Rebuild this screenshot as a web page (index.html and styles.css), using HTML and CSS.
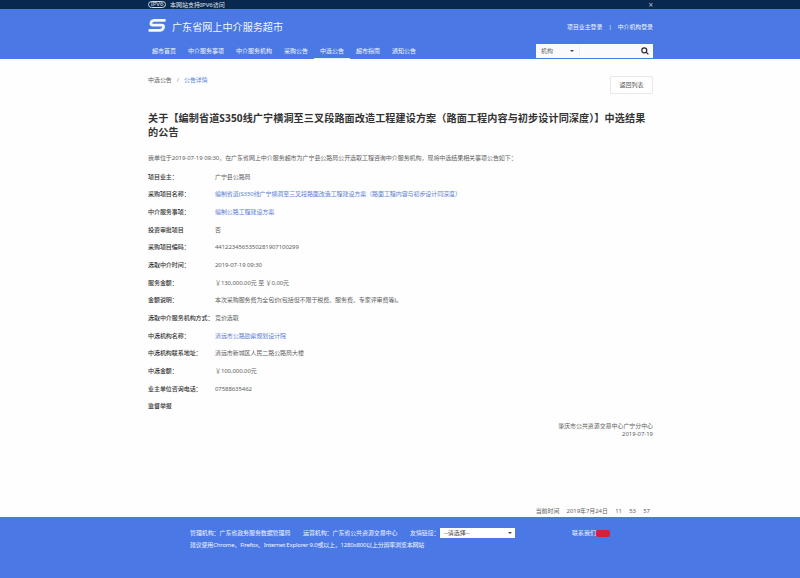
FILE: index.html
```html
<!DOCTYPE html>
<html lang="zh-CN">
<head>
<meta charset="utf-8">
<title>广东省网上中介服务超市</title>
<link rel="stylesheet" href="styles.css">
</head>
<body>
<div class="topbar"><div class="wrap topbar-row"><span class="ipv6">IPV6</span><span>本网站支持IPV6访问</span><span class="close">×</span></div></div>
<header class="header">
  <div class="wrap">
    <div class="brand">
      <svg class="logo" viewBox="0 0 18 15"><path d="M17.6 2.4H6.8C4.6 2.4 3.6 3 3 4.8 2.5 6.6 3.2 7.2 5 7.2H13.6C15.5 7.2 16 8 15.4 9.8 14.8 11.7 13.8 12.4 11.6 12.4H.6" fill="none" stroke="#f4f8fb" stroke-width="2.7"/></svg>
      <h1 class="site">广东省网上中介服务超市</h1>
      <div class="login"><a>项目业主登录</a><i>|</i><a>中介机构登录</a></div>
    </div>
    <div class="navrow">
      <nav class="nav"><a>超市首页</a><a>中介服务事项</a><a>中介服务机构</a><a>采购公告</a><a class="active">中选公告</a><a>超市指南</a><a>通知公告</a></nav>
      <div class="search"><span class="kind">机构</span><span class="caret"></span><span class="field"></span>
        <svg class="glass" viewBox="0 0 8 8"><circle cx="3.3" cy="3.3" r="2.5"/><path d="M5.2 5.2 7.4 7.4"/></svg></div>
    </div>
  </div>
</header>
<main class="wrap main">
  <div class="crumbs"><div class="trail"><span>中选公告</span><i>/</i><a>公告详情</a></div><button class="back">返回列表</button></div>
  <h2 class="title"><span>关于【编制省道S350线广宁横洞至三叉段路面改造工程建设方案（路面工程内容与初步设计同深度）】中选结果</span><br>的公告</h2>
  <p class="intro">我单位于2019-07-19 09:30，在广东省网上中介服务超市为广宁县公路局公开选取工程咨询中介服务机构，现将中选结果相关事项公告如下：</p>
  <dl class="details">
    <dt>项目业主：</dt><dd>广宁县公路局</dd>
    <dt>采购项目名称：</dt><dd><a>编制省道(S350线广宁横洞至三叉段路面改造工程建设方案（路面工程内容与初步设计同深度）</a></dd>
    <dt>中介服务事项：</dt><dd><a>编制公路工程建设方案</a></dd>
    <dt>投资审批项目</dt><dd>否</dd>
    <dt>采购项目编码：</dt><dd>4412234565350281907100299</dd>
    <dt>选取中介时间：</dt><dd>2019-07-19 09:30</dd>
    <dt>服务金额：</dt><dd>￥130,000.00元 至 ￥0.00元</dd>
    <dt>金额说明：</dt><dd>本次采购服务费为全包价(包括但不限于税费、服务费、专家评审费等)。</dd>
    <dt>选取中介服务机构方式：</dt><dd>竞价选取</dd>
    <dt>中选机构名称：</dt><dd><a>清远市公路勘察规划设计院</a></dd>
    <dt>中选机构联系地址：</dt><dd>清远市新城区人民二路公路局大楼</dd>
    <dt>中选金额：</dt><dd>￥100,000.00元</dd>
    <dt>业主单位咨询电话：</dt><dd>07588635462</dd>
    <dt>监督举报</dt><dd></dd>
  </dl>
  <div class="sign">肇庆市公共资源交易中心广宁分中心<br>2019-07-19</div>
  <div class="clock"><span>当前时间</span><span>2019年7月24日</span><span>11</span><span>53</span><span>57</span></div>
</main>
<footer class="footer">
  <div class="foot-row"><span class="org">管理机构：广东省政务服务数据管理局</span><span class="org2">运营机构：广东省公共资源交易中心</span><span class="links">友情链接：</span><span class="select">--请选择--<b class="caret"></b></span><span class="contact">联系我们</span><span class="redact"></span></div>
  <div class="foot-tip">建议使用Chrome、Firefox、Internet Explorer 9.0或以上，1280x800以上分辨率浏览本网站</div>
</footer>
</body>
</html>
```
FILE: styles.css
```css
* { box-sizing: border-box; }
body { margin: 0; width: 800px; height: 578px; display: flex; flex-direction: column; overflow: hidden; background: #fefefe; color: #606060; font: 6px/10px "Noto Sans", "Noto Sans CJK SC", sans-serif; white-space: nowrap; }
i { font-style: normal; }
.wrap { width: 505px; margin-left: 148px; }
.topbar { height: 9px; background: #08284f; color: #e2e8f0; }
.topbar-row { display: flex; align-items: center; height: 9px; }
.ipv6 { width: 18px; height: 7px; margin-right: 4px; border: 1px solid #cbd5e3; border-radius: 4px; line-height: 5px; text-align: center; }
.close { margin-left: auto; font-size: 8px; color: #b5c0d0; }
.header { height: 50px; background: #4a78e4; color: #f4f7ff; }
.brand { display: flex; align-items: center; height: 33px; padding-top: 2px; }
.logo { width: 18px; height: 15px; margin: -2px 6px 0 0; }
.site { margin: 0; font-size: 10.1px; font-weight: 400; line-height: 16px; }
.login { display: flex; gap: 6px; margin-left: auto; font-size: 5.9px; }
.navrow { display: flex; height: 17px; }
.nav { display: flex; gap: 12px; padding-left: 4px; }
.nav a { position: relative; height: 17px; line-height: 18px; }
.nav .active::after { content: ""; position: absolute; left: -6px; right: -6px; bottom: 0; height: 1px; background: #e2f0fa; }
.search { display: flex; align-items: center; width: 117px; height: 14px; margin: 2px 0 0 auto; padding: 0 4px 0 5px; background: #fafafc; color: #666; }
.kind { width: 29px; }
.caret { width: 0; height: 0; border: 2px solid transparent; border-top-color: #444; border-bottom: 0; }
.field { flex: 1; height: 10px; margin-left: 5px; border-left: 1px solid #eee; }
.glass { width: 8px; height: 8px; fill: none; stroke: #222; stroke-width: 1.2; }
.main { flex: 1; display: flex; flex-direction: column; }
.crumbs { display: flex; justify-content: space-between; height: 18px; margin-top: 17px; line-height: 9px; }
.trail { font-size: 5.95px; }
.crumbs i { margin: 0 5px; color: #999; }
.main a { color: #5b80d3; }
.back { width: 43px; height: 18px; padding: 0; border: 1px solid #e8e8e8; border-radius: 1px; background: #fff; color: #555; font: inherit; }
.title { margin: 17px 0 0; color: #333; font-size: 10.1px; font-weight: 700; line-height: 14px; letter-spacing: .1px; }
.intro { margin: 13.5px 0 0; letter-spacing: -.05px; }
.details { display: grid; grid-template-columns: 67px 1fr; grid-auto-rows: 17.65px; align-items: center; margin: 5.5px 0 0; }
.details dt { color: #333; font-weight: 500; letter-spacing: -.05px; }
.details dd { margin: 0; letter-spacing: -.08px; }
.sign { margin-top: 7px; text-align: right; line-height: 8px; font-size: 5.93px; }
.clock { display: flex; gap: 7.3px; justify-content: flex-end; margin: auto 3px 1px 0; font-size: 5.9px; }
.footer { height: 61px; padding: 10px 0 0 190px; background: #4a78e4; color: #f2f6ff; }
.foot-row { display: flex; align-items: center; height: 12px; }
.org { width: 113px; letter-spacing: -.1px; }
.org2 { width: 107px; letter-spacing: -.1px; }
.links { width: 30px; letter-spacing: -.1px; }
.select { display: flex; align-items: center; justify-content: space-between; width: 75px; height: 10px; padding: 0 3px 0 4px; background: #fff; color: #444; }
.contact { margin-left: 57px; }
.redact { width: 14px; height: 7px; border-radius: 2px; background: #d71f42; }
.foot-tip { margin-top: 1px; letter-spacing: -.21px; }
```
